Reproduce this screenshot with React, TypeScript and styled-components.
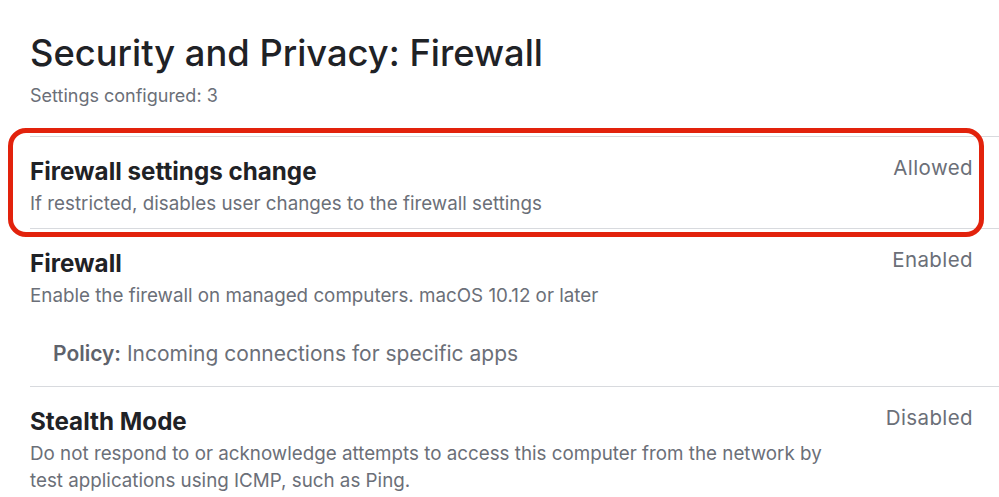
import React from "react";
import styled, { createGlobalStyle } from "styled-components";

const GlobalStyle = createGlobalStyle`
  html, body {
    margin: 0;
    padding: 0;
    background: #ffffff;
  }
  body {
    font-family: Inter, "Open Sans", "Liberation Sans", sans-serif;
    -webkit-font-smoothing: antialiased;
  }
`;

const Page = styled.div`
  padding: 30px 0 0 30px;
  width: 969px;
  height: 467px;
  overflow: hidden;
`;

const Heading = styled.h1`
  margin: 0;
  font-size: 36.3px;
  line-height: 46px;
  font-weight: 500;
  color: #1f2226;
`;

const Subtitle = styled.div`
  margin-top: 10px;
  font-size: 18px;
  line-height: 20px;
  color: #6b6f78;
`;

const List = styled.div`
  margin-top: 30px;
  border-top: 1px solid #d8dade;
`;

const Row = styled.div`
  position: relative;
  padding: 22px 26px 11px 0;
  border-bottom: 1px solid #d8dade;
  &:last-child {
    border-bottom: none;
  }
`;

const Highlight = styled.div`
  position: absolute;
  left: -22px;
  top: -9px;
  right: 15px;
  bottom: -9px;
  border: 5px solid #e2220c;
  border-radius: 18px;
  pointer-events: none;
`;

const Header = styled.div`
  display: flex;
  justify-content: space-between;
  align-items: flex-start;
`;

const Title = styled.div`
  font-size: 24.2px;
  line-height: 26px;
  font-weight: 700;
  color: #1f2226;
`;

const Value = styled.div`
  font-size: 20.5px;
  line-height: 22px;
  letter-spacing: 0.4px;
  margin-top: -2px;
  color: #6b6f78;
`;

const Description = styled.div`
  margin-top: 5px;
  max-width: 810px;
  font-size: 18.8px;
  line-height: 27px;
  color: #6b6f78;
`;

const Policy = styled.div`
  margin: 32px 0 8px 23px;
  font-size: 21px;
  line-height: 26px;
  color: #6b6f78;
  b {
    font-weight: 600;
    color: #5f636c;
  }
`;

interface Setting {
  title: string;
  value: string;
  description: string;
  policy?: string;
  highlighted?: boolean;
}

const settings: Setting[] = [
  {
    title: "Firewall settings change",
    value: "Allowed",
    description: "If restricted, disables user changes to the firewall settings",
    highlighted: true,
  },
  {
    title: "Firewall",
    value: "Enabled",
    description: "Enable the firewall on managed computers. macOS 10.12 or later",
    policy: "Incoming connections for specific apps",
  },
  {
    title: "Stealth Mode",
    value: "Disabled",
    description:
      "Do not respond to or acknowledge attempts to access this computer from the network by test applications using ICMP, such as Ping.",
  },
];

export default function App() {
  return (
    <>
      <GlobalStyle />
      <Page>
        <Heading>Security and Privacy: Firewall</Heading>
        <Subtitle>Settings configured: 3</Subtitle>
        <List>
          {settings.map((s, i) => (
            <Row key={i}>
              {s.highlighted && <Highlight />}
              <Header>
                <Title>{s.title}</Title>
                <Value>{s.value}</Value>
              </Header>
              <Description>{s.description}</Description>
              {s.policy && (
                <Policy>
                  <b>Policy:</b> {s.policy}
                </Policy>
              )}
            </Row>
          ))}
        </List>
      </Page>
    </>
  );
}
